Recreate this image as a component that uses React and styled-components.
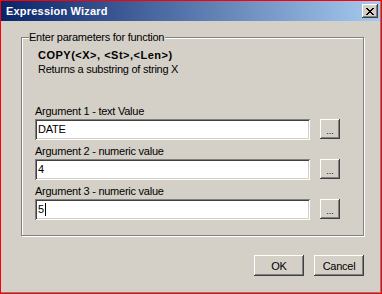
import React from 'react';
import styled, { createGlobalStyle } from 'styled-components';

const GlobalStyle = createGlobalStyle`
  html, body {
    margin: 0;
    padding: 0;
    background: #d4d0c8;
  }
  body {
    font-family: "Liberation Sans", Arial, sans-serif;
    font-size: 11px;
    letter-spacing: -0.25px;
    color: #000;
  }
`

const Frame = styled.div`
  width: 382px;
  height: 294px;
  box-sizing: border-box;
  border: 1px solid #ff0000;
  display: flex;
  background: #d4d0c8;
`

const Window = styled.div`
  flex: 1;
  display: flex;
  flex-direction: column;
  border-right: 1px solid #808080;
  border-bottom: 1px solid #808080;
`

const TitleBar = styled.div`
  height: 20px;
  flex: none;
  display: flex;
  align-items: center;
  justify-content: space-between;
  padding: 0 2px 0 5px;
  background: linear-gradient(to right, #0a246a, #a6caf0);
`

const Title = styled.span`
  color: #fff;
  font-weight: bold;
  font-size: 11px;
  letter-spacing: 0.2px;
  line-height: 13px;
`

const raised = `
  box-shadow: inset -1px -1px 0 #404040, inset 1px 1px 0 #ffffff,
    inset -2px -2px 0 #808080, inset 2px 2px 0 #d4d0c8;
`

const CloseButton = styled.div`
  width: 16px;
  height: 14px;
  background: #d4d0c8;
  display: flex;
  align-items: center;
  justify-content: center;
  ${raised}
`

const Body = styled.div`
  flex: 1;
  display: flex;
  flex-direction: column;
  padding: 10px 16px 16px 20px;
`

const Group = styled.fieldset`
  margin: 0;
  padding: 5px 23px 15px 13px;
  border: 1px solid #808080;
  box-shadow: inset 1px 1px 0 #ffffff, 1px 1px 0 #ffffff;
  display: flex;
  flex-direction: column;
  min-width: 0;
`

const Legend = styled.legend`
  margin-left: -6px;
  padding: 0 1px 0 0;
  line-height: 13px;
  background: #d4d0c8;
`

const FuncName = styled.div`
  font-weight: bold;
  letter-spacing: 0.5px;
  line-height: 13px;
  margin-left: 3px;
`

const FuncDesc = styled.div`
  line-height: 13px;
  margin: 1px 0 29px 3px;
`

const ArgRow = styled.div`
  display: flex;
  flex-direction: column;
  gap: 1px;
  & + & {
    margin-top: 5px;
  }
`

const ArgLabel = styled.div`
  line-height: 13px;
`

const InputLine = styled.div`
  display: flex;
  gap: 10px;
`

const Field = styled.div`
  flex: 1;
  height: 21px;
  box-sizing: border-box;
  background: #fff;
  padding: 2px 3px;
  line-height: 15px;
  font-size: 11px;
  box-shadow: inset 1px 1px 0 #808080, inset -1px -1px 0 #ffffff,
    inset 2px 2px 0 #404040, inset -2px -2px 0 #d4d0c8;
  display: flex;
  align-items: center;

  &::after {
    content: '';
    display: ${p => (p.$focused ? 'inline-block' : 'none')};
    width: 1px;
    height: 13px;
    margin-left: 1px;
    background: #000;
  }
`

const Button = styled.div`
  width: ${p => p.$w || 50}px;
  height: ${p => p.$h || 21}px;
  box-sizing: border-box;
  background: #d4d0c8;
  display: flex;
  align-items: center;
  justify-content: center;
  font-size: 11px;
  ${raised}
`

const Dots = styled.span`
  font-size: 9px;
  letter-spacing: 0;
  margin-top: 3px;
`

const ButtonRow = styled.div`
  display: flex;
  justify-content: flex-end;
  gap: 10px;
  margin-top: 19px;
`

const args = [
  { label: 'Argument 1 - text Value', value: 'DATE' },
  { label: 'Argument 2 - numeric value', value: '4' },
  { label: 'Argument 3 - numeric value', value: '5', focused: true },
]

export default function App() {
  return (
    <>
      <GlobalStyle />
      <Frame>
        <Window>
          <TitleBar>
            <Title>Expression Wizard</Title>
            <CloseButton>
              <svg width="8" height="7" viewBox="0 0 8 7" shapeRendering="crispEdges">
                <path d="M0 0h2v1h-2zM6 0h2v1h-2zM1 1h2v1h-2zM5 1h2v1h-2zM2 2h4v1h-4zM3 3h2v1h-2zM2 4h4v1h-4zM1 5h2v1h-2zM5 5h2v1h-2zM0 6h2v1h-2zM6 6h2v1h-2z" fill="#000" />
              </svg>
            </CloseButton>
          </TitleBar>
          <Body>
            <Group>
              <Legend>Enter parameters for function</Legend>
              <FuncName>COPY(&lt;X&gt;, &lt;St&gt;,&lt;Len&gt;)</FuncName>
              <FuncDesc>Returns a substring of string X</FuncDesc>
              {args.map(a => (
                <ArgRow key={a.label}>
                  <ArgLabel>{a.label}</ArgLabel>
                  <InputLine>
                    <Field $focused={a.focused}>{a.value}</Field>
                    <Button $w={20} $h={20}><Dots>...</Dots></Button>
                  </InputLine>
                </ArgRow>
              ))}
            </Group>
            <ButtonRow>
              <Button>OK</Button>
              <Button>Cancel</Button>
            </ButtonRow>
          </Body>
        </Window>
      </Frame>
    </>
  );
}
